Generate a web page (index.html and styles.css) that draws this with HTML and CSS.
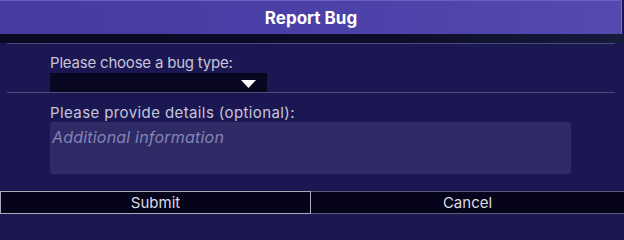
FILE: index.html
```html
<!DOCTYPE html>
<html>
<head>
<meta charset="utf-8">
<link rel="stylesheet" href="styles.css">
</head>
<body>
<div class="dialog">
  <div class="header">Report Bug</div>
  <div class="shadow-band"></div>
  <div class="rule"></div>
  <div class="section first">
    <div class="label label-type">Please choose a bug type:</div>
    <div class="select">
      <svg class="caret" width="15" height="8" viewBox="0 0 15 8"><path d="M0 0 H15 L7.5 8 Z" fill="#ffffff"/></svg>
    </div>
  </div>
  <div class="rule"></div>
  <div class="section second">
    <div class="label label-details">Please provide details (optional):</div>
    <div class="textarea"><span class="placeholder">Additional information</span></div>
  </div>
  <div class="buttons">
    <div class="btn submit">Submit</div>
    <div class="btn cancel">Cancel</div>
  </div>
</div>
</body>
</html>
```
FILE: styles.css
```css
html, body {
  margin: 0;
  padding: 0;
  background: #1a1750;
  width: 624px;
  height: 216px;
  overflow: hidden;
  font-family: Inter, "Noto Sans", sans-serif;
}
.dialog {
  display: flex;
  flex-direction: column;
  width: 624px;
  height: 216px;
  background: #1b1752;
}
.header {
  height: 31px;
  padding-top: 3px;
  margin-right: 2px;
  line-height: 31px;
  text-align: center;
  color: #ffffff;
  font-size: 17px;
  font-weight: 700;
  background: linear-gradient(90deg, #463a9f 0%, #4b40a8 50%, #5349ae 100%);
  box-shadow: inset 0 1px 0 #6a60c2, inset -1px 0 0 #7a72c8;
}
.shadow-band {
  height: 9px;
  background: linear-gradient(90deg, #0a0922 0%, #0d0c2a 60%, #161c3c 100%);
}
.rule {
  height: 1px;
  margin: 0 9px 0 7px;
  background: #4c4a7c;
}
.section {
  display: flex;
  flex-direction: column;
  align-items: flex-start;
  padding-left: 50px;
}
.section.first {
  padding-top: 10px;
}
.section.second {
  padding-top: 11px;
}
.label {
  color: #c6c5da;
  font-size: 15px;
  line-height: 18px;
}
.label-type {
  letter-spacing: -0.2px;
  margin-bottom: 1px;
}
.label-details {
  letter-spacing: 0.4px;
  margin-bottom: 0;
}
.select {
  width: 217px;
  height: 19px;
  background: #09071f;
  display: flex;
  justify-content: flex-end;
  align-items: center;
  box-sizing: border-box;
  padding-right: 11px;
  padding-top: 3px;
}
.caret {
  display: block;
}
.textarea {
  width: 521px;
  height: 52px;
  box-sizing: border-box;
  background: #2d2a66;
  border-radius: 3px;
  padding: 5px 0 0 2px;
}
.placeholder {
  color: #8683b4;
  font-style: italic;
  font-size: 16px;
  line-height: 19px;
  letter-spacing: 0.2px;
}
.buttons {
  display: flex;
  margin-top: 17px;
  height: 23px;
}
.btn {
  box-sizing: border-box;
  height: 23px;
  line-height: 21px;
  text-align: center;
  color: #dcdce6;
  font-size: 15px;
  background: #06041a;
}
.submit {
  width: 311px;
  border: 1px solid #a9a9b8;
}
.cancel {
  width: 313px;
  border-top: 1px solid #5c5c72;
  border-bottom: 1px solid #5c5c72;
}
```
